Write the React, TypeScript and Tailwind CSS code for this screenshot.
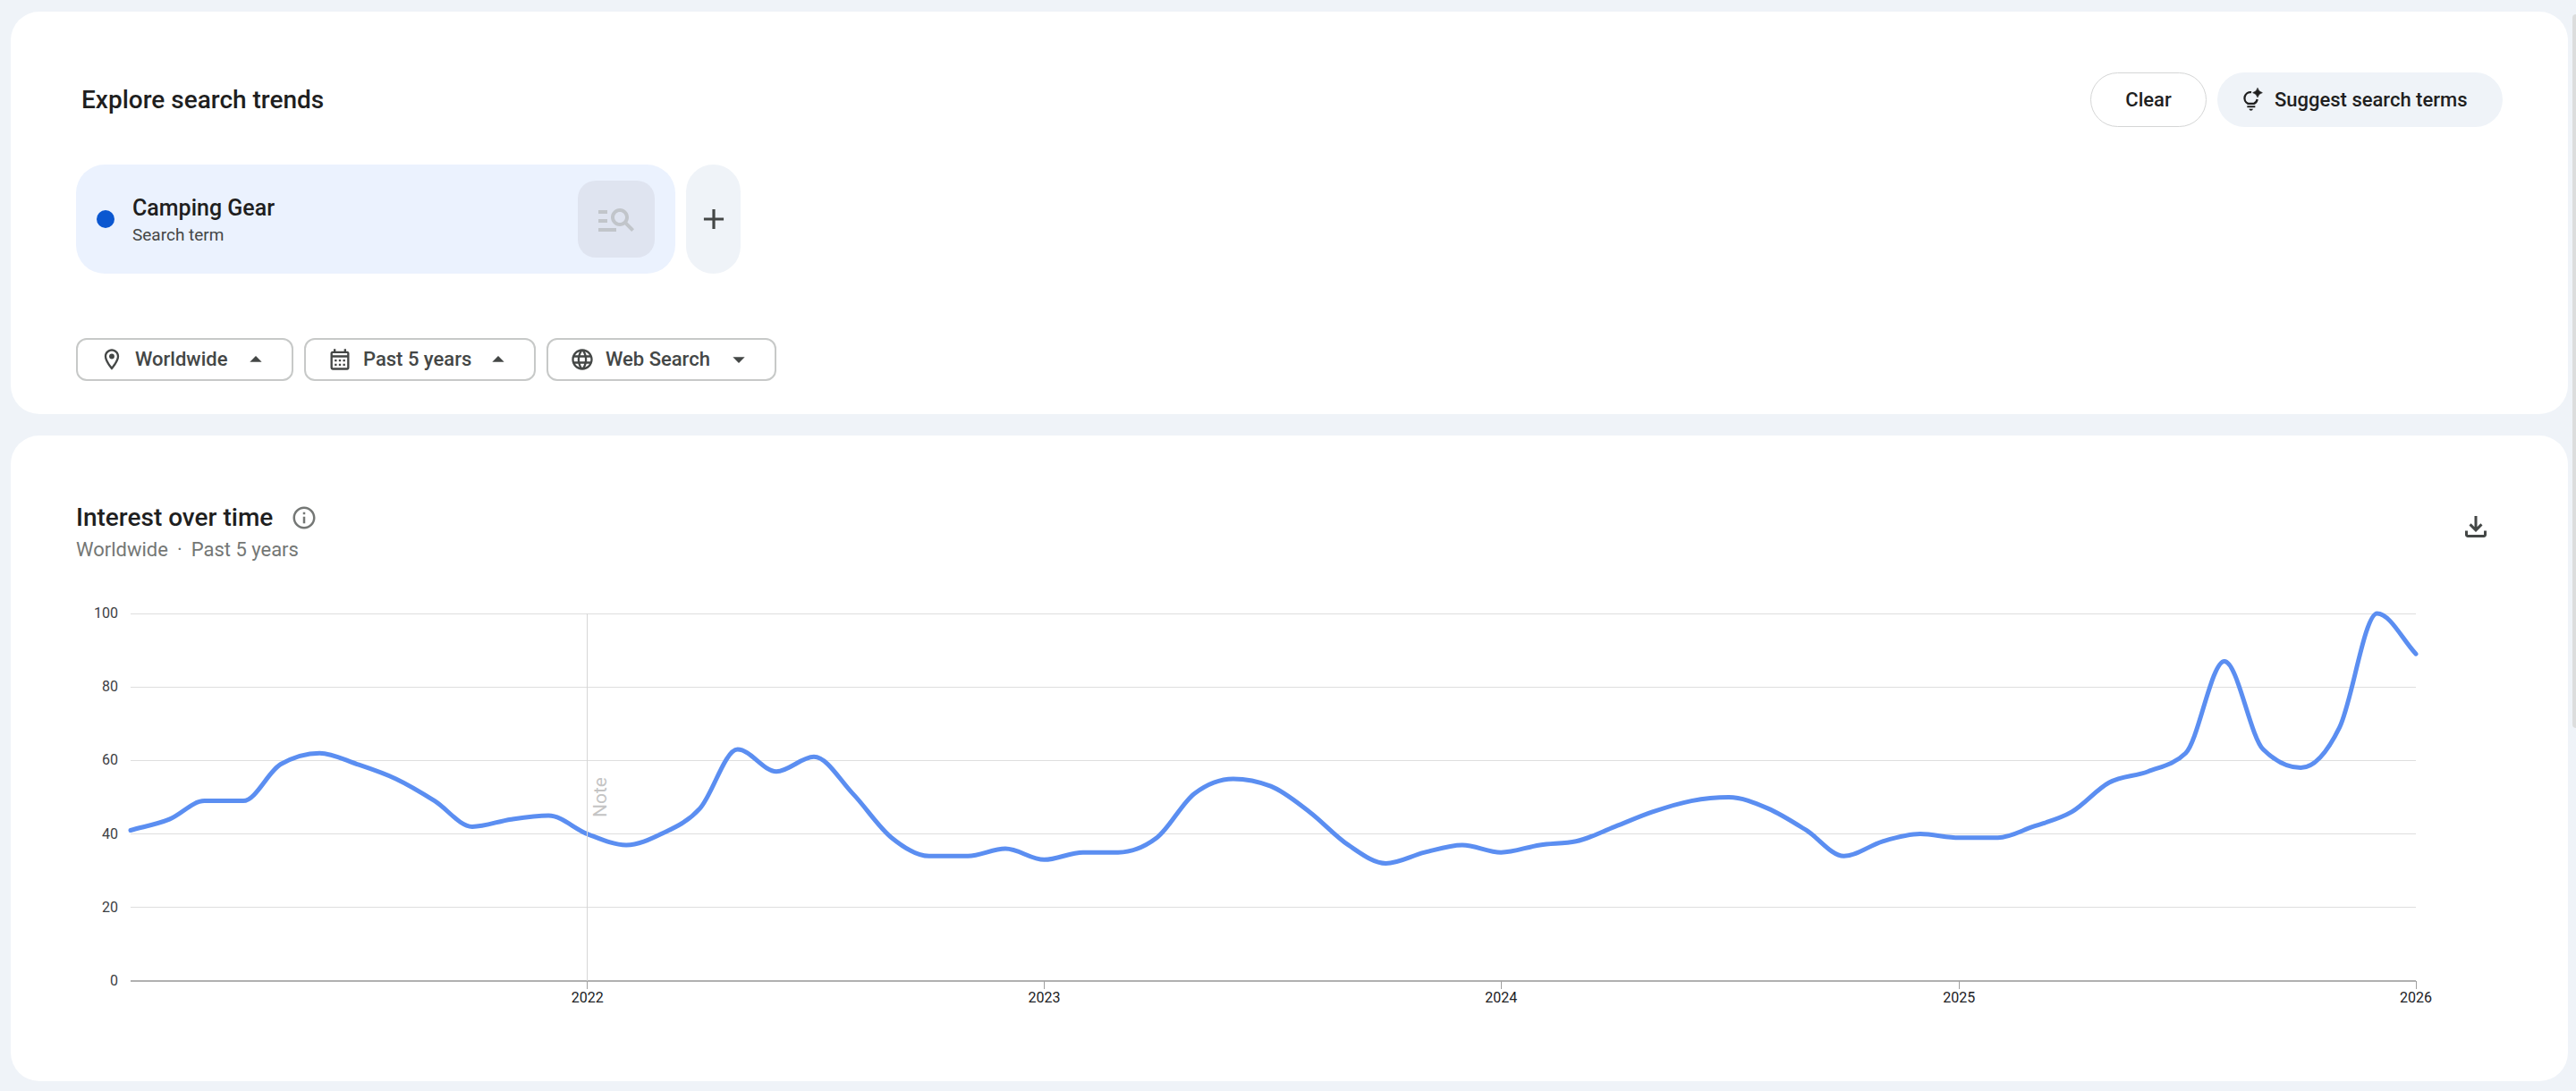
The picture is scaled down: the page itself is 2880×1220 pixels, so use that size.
import type { ReactNode } from "react";
import {
  MdArrowDropDown,
  MdArrowDropUp,
  MdInfoOutline,
  MdLanguage,
  MdManageSearch,
  MdOutlineCalendarMonth,
  MdOutlineLocationOn,
} from "react-icons/md";

// Monthly interest, January 2021 to January 2026
const interest = [
  41, 44, 49, 49, 59, 62, 59, 55, 49, 42, 44, 45,
  40, 37, 40, 47, 63, 57, 61, 51, 39, 34, 34, 36,
  33, 35, 35, 39, 51, 55, 53, 46, 37, 32, 35, 37,
  35, 37, 38, 42, 46, 49, 50, 47, 41, 34, 38, 40,
  39, 39, 42, 46, 54, 57, 62, 87, 63, 58, 69, 100,
  89,
];

const START = Date.UTC(2021, 0, 1);
const END = Date.UTC(2026, 0, 1);

const chart = { width: 2713, height: 477, left: 61, right: 2616, top: 26, bottom: 437 };

const xAt = (month: number) =>
  chart.left +
  ((Date.UTC(2021, month, 1) - START) / (END - START)) * (chart.right - chart.left);
const yAt = (value: number) =>
  chart.bottom - (value / 100) * (chart.bottom - chart.top);

// Monotone cubic interpolation, so that peaks stay on the data points
function smoothPath(values: number[]) {
  const pts = values.map((v, i) => ({ x: xAt(i), y: yAt(v) }));
  const n = pts.length;
  const slopes = pts
    .slice(1)
    .map((p, i) => (p.y - pts[i].y) / (p.x - pts[i].x));

  const tangents = pts.map((_, i) => {
    if (i === 0) return slopes[0];
    if (i === n - 1) return slopes[n - 2];
    const a = slopes[i - 1];
    const b = slopes[i];
    if (a * b <= 0) return 0;
    const mean = (a + b) / 2;
    const limit = 2 * Math.min(Math.abs(a), Math.abs(b));
    return Math.sign(mean) * Math.min(Math.abs(mean), limit);
  });

  let d = `M${pts[0].x},${pts[0].y}`;
  for (let i = 1; i < n; i++) {
    const p = pts[i - 1];
    const q = pts[i];
    const h = (q.x - p.x) / 3;
    d += `C${p.x + h},${p.y + tangents[i - 1] * h} ${q.x - h},${q.y - tangents[i] * h} ${q.x},${q.y}`;
  }
  return d;
}

function SuggestIcon() {
  return (
    <svg viewBox="534 84 72 81" className="w-6 h-[27px]" fill="none" aria-hidden="true">
      <path
        d="M564 99.500A20 20 0 0 0 553 137.500H573A20 20 0 0 0 584 123"
        stroke="currentColor"
        strokeWidth="7"
      />
      <path
        d="M585 85Q588 98 601 101Q588 104 585 117Q582 104 569 101Q582 98 585 85Z"
        fill="currentColor"
        stroke="currentColor"
        strokeWidth="2"
      />
      <path d="M550 145H577V151H550ZM556 155H570Q568 161 563 161Q558 161 556 155Z" fill="currentColor" />
    </svg>
  );
}

function PlusIcon() {
  return (
    <svg viewBox="0 0 24 24" className="size-[38px]" fill="currentColor" aria-hidden="true">
      <path d="M11 5h2v6h6v2h-6v6h-2v-6H5v-2h6z" />
    </svg>
  );
}

function DownloadIcon() {
  return (
    <svg viewBox="0 -960 960 960" className="size-9" fill="currentColor" aria-hidden="true">
      <path d="M480-320 280-520l56-58 104 104v-326h80v326l104-104 56 58-200 200ZM240-160q-33 0-56.500-23.500T160-240v-120h80v120h480v-120h80v120q0 33-23.500 56.500T720-160H240Z" />
    </svg>
  );
}

function FilterChip({
  icon,
  label,
  arrow,
  className,
}: {
  icon: ReactNode;
  label: string;
  arrow: ReactNode;
  className: string;
}) {
  return (
    <button
      type="button"
      className={`flex h-12 items-center justify-between rounded-xl border-2 border-[#c7c9c8] px-6 text-[22px] leading-7 font-medium text-[#444746] ${className}`}
    >
      <span className="flex items-center gap-3">
        {icon}
        {label}
      </span>
      {arrow}
    </button>
  );
}

function ExploreCard() {
  return (
    <section className="rounded-[32px] bg-white px-[73px] pt-[68px] pb-[37px]">
      <div className="flex items-center justify-between">
        <h1 className="pl-1.5 text-[28px] leading-9 font-medium text-[#1f1f1f]">
          Explore search trends
        </h1>
        <div className="flex gap-3 text-[22px] font-medium text-[#1f1f1f]">
          <button
            type="button"
            className="h-[61px] w-[130px] rounded-full border border-[#d5d6d6]"
          >
            Clear
          </button>
          <button
            type="button"
            className="flex h-[61px] w-[319px] items-center gap-3 rounded-full bg-[#eff3f8] pl-7"
          >
            <SuggestIcon />
            Suggest search terms
          </button>
        </div>
      </div>

      {/* Search terms */}
      <div className="mt-[42px] flex gap-3">
        <div className="flex h-[122px] w-[670px] items-center rounded-[32px] bg-[#ebf2fe] px-[23px]">
          <span className="size-5 rounded-full bg-[#0b57d0]" />
          <div className="ml-5 flex-1 pt-1">
            <p className="text-[25px] leading-8 font-medium text-[#1f1f1f]">Camping Gear</p>
            <p className="text-[19px] leading-7 text-[#444746]">Search term</p>
          </div>
          <div className="flex size-[86px] items-center justify-center rounded-[20px] bg-[#dfe4f0]">
            <MdManageSearch className="size-12 text-[#c1c5ca]" />
          </div>
        </div>
        <button
          type="button"
          aria-label="Add a search term"
          className="flex w-[61px] items-center justify-center rounded-full bg-[#eff3f8] text-[#444746]"
        >
          <PlusIcon />
        </button>
      </div>

      {/* Filters */}
      <div className="mt-[72px] flex gap-3">
        <FilterChip
          className="w-[243px]"
          icon={<MdOutlineLocationOn className="size-7" />}
          label="Worldwide"
          arrow={<MdArrowDropUp className="size-8" />}
        />
        <FilterChip
          className="w-[259px]"
          icon={<MdOutlineCalendarMonth className="size-7" />}
          label="Past 5 years"
          arrow={<MdArrowDropUp className="size-8" />}
        />
        <FilterChip
          className="w-[257px]"
          icon={<MdLanguage className="size-7" />}
          label="Web Search"
          arrow={<MdArrowDropDown className="size-8" />}
        />
      </div>
    </section>
  );
}

function InterestChart() {
  const noteX = xAt(12);

  return (
    <svg
      viewBox={`0 0 ${chart.width} ${chart.height}`}
      className="block h-auto w-full"
      role="img"
      aria-label="Interest over time for Camping Gear"
    >
      {[20, 40, 60, 80, 100].map((value) => (
        <line
          key={value}
          x1={chart.left}
          x2={chart.right}
          y1={yAt(value)}
          y2={yAt(value)}
          stroke="#dedede"
          shapeRendering="crispEdges"
        />
      ))}
      {[0, 20, 40, 60, 80, 100].map((value) => (
        <text
          key={value}
          x={chart.left - 14}
          y={yAt(value) + 5}
          textAnchor="end"
          fontSize="16"
          fill="#3c4043"
        >
          {value}
        </text>
      ))}

      {/* Time axis */}
      <line
        x1={chart.left}
        x2={chart.right}
        y1={chart.bottom}
        y2={chart.bottom}
        stroke="#b0b0b0"
        strokeWidth="2"
      />
      {[12, 24, 36, 48, 60].map((month) => (
        <g key={month}>
          <line
            x1={xAt(month)}
            x2={xAt(month)}
            y1={chart.bottom}
            y2={chart.bottom + 9}
            stroke="#a0a0a0"
            shapeRendering="crispEdges"
          />
          <text
            x={xAt(month)}
            y={chart.bottom + 24}
            textAnchor="middle"
            fontSize="16"
            fill="#202124"
          >
            {2021 + month / 12}
          </text>
        </g>
      ))}

      <path
        d={smoothPath(interest)}
        fill="none"
        stroke="#5b8ef1"
        strokeWidth="5"
        strokeLinecap="round"
        strokeLinejoin="round"
      />

      {/* Data collection note */}
      <line
        x1={noteX}
        x2={noteX}
        y1={chart.top}
        y2={chart.bottom}
        stroke="#d6d6d6"
        shapeRendering="crispEdges"
      />
      <text
        transform={`translate(${noteX + 21} 254) rotate(-90)`}
        fontSize="21"
        fill="#c4c4c4"
      >
        Note
      </text>
    </svg>
  );
}

function InterestCard() {
  return (
    <section className="rounded-[32px] bg-white px-[73px] pt-[74px] pb-[72px]">
      <div className="flex items-start justify-between pr-3">
        <div>
          <div className="flex items-center gap-5">
            <h2 className="text-[28px] leading-9 font-medium text-[#1f1f1f]">
              Interest over time
            </h2>
            <button type="button" aria-label="About this chart" className="text-[#747775]">
              <MdInfoOutline className="size-[30px]" />
            </button>
          </div>
          <p className="text-[22px] leading-9 text-[#747775]">
            Worldwide<span className="mx-2.5">·</span>Past 5 years
          </p>
        </div>
        <button type="button" aria-label="Download" className="pt-2.5 text-[#444746]">
          <DownloadIcon />
        </button>
      </div>
      <div className="mt-[27px]">
        <InterestChart />
      </div>
    </section>
  );
}

export default function App() {
  return (
    <main className="relative flex min-h-screen flex-col gap-6 bg-[#eff3f8] pt-[13px] pr-[9px] pb-[11px] pl-3 font-[Roboto,sans-serif]">
      <ExploreCard />
      <InterestCard />
      {/* Scroll thumb */}
      <div className="absolute top-4 right-0 h-[798px] w-1 rounded-l-full bg-[#dcdddd]" />
    </main>
  );
}
